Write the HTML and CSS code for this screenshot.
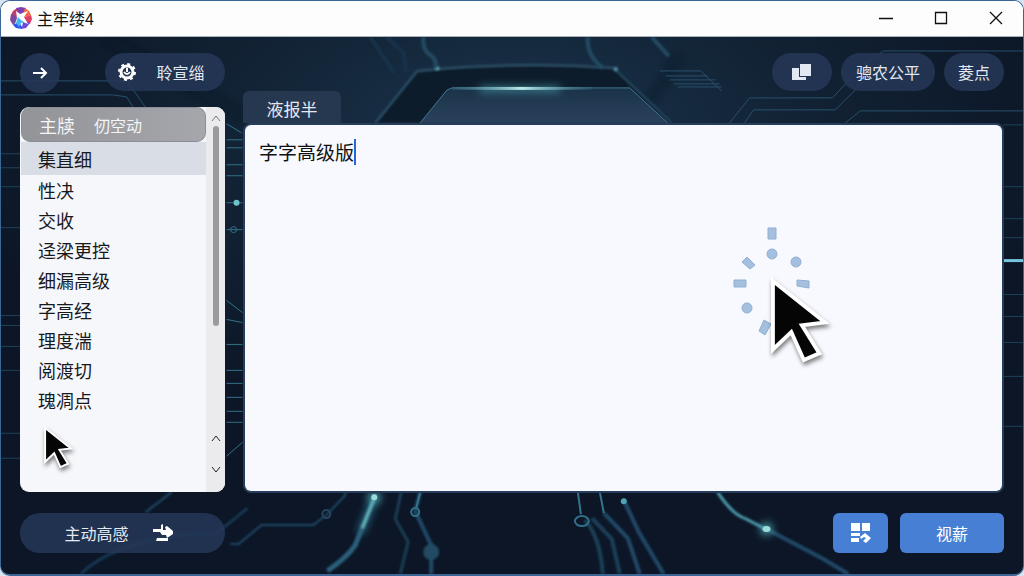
FILE: index.html
```html
<!DOCTYPE html>
<html lang="zh-CN">
<head>
  <meta charset="UTF-8" />
  <meta name="viewport" content="width=device-width, initial-scale=1.0"/>
  <title>主牢缕4</title>
  <link rel="stylesheet" href="styles.css">
</head>
<body>
  <div class="window">
    <header class="titlebar">
      <svg class="logo" viewBox="0 0 22 22">
        <path d="M11 11L1 8L3 4L7 1z" fill="#c0406b"/>
        <path d="M11 11L6 1L11 0L16 1z" fill="#7b3fb5"/>
        <path d="M11 11L15 1L19 4L21 8z" fill="#f06a3c"/>
        <path d="M11 11L21 8L22 12L20 17z" fill="#e03f62"/>
        <path d="M11 11L20 16L16 21L11 22z" fill="#6a4bd8"/>
        <path d="M11 11L12 22L6 21L3 18z" fill="#2f55f0"/>
        <path d="M11 11L3 18L0 13L1 7z" fill="#7a4a9c"/>
        <path d="M6 4L10 7L18 4L14 10L18 17L13 15L12 20L9 15L5 17L7 11z" fill="#fff"/>
        <path d="M8 10L11 13L14 15L11 16L9 20L6 16z" fill="#43b4f2"/>
      </svg>
      <h1>主牢缕4</h1>
      <div class="window-controls">
        <button aria-label="最小化"><svg viewBox="0 0 14 14"><path d="M0 7.5h14"/></svg></button>
        <button aria-label="最大化"><svg viewBox="0 0 14 14"><path d="M1.500 1.500h11v11h-11z"/></svg></button>
        <button aria-label="关闭"><svg viewBox="0 0 14 14"><path d="M1 1l12 12M13 1L1 13"/></svg></button>
      </div>
    </header>

    <main class="workspace">
      <svg class="circuit" viewBox="0 0 1024 538" preserveAspectRatio="none" aria-hidden="true">
        <defs>
          <radialGradient id="haze" cx="50%" cy="18%" r="55%">
            <stop offset="0" stop-color="#1b354c"/>
            <stop offset="0.5" stop-color="#122335"/>
            <stop offset="1" stop-color="#0c1626"/>
          </radialGradient>
          <linearGradient id="hood" x1="0" y1="0" x2="0" y2="1">
            <stop offset="0" stop-color="#1b3348"/>
            <stop offset="1" stop-color="#29415c"/>
          </linearGradient>
          <linearGradient id="beam">
            <stop offset="0" stop-color="#3b7892" stop-opacity="0.3"/>
            <stop offset="0.5" stop-color="#b9ebe8"/>
            <stop offset="1" stop-color="#3b7892" stop-opacity="0.2"/>
          </linearGradient>
          <filter id="glow" filterUnits="userSpaceOnUse" x="0" y="0" width="1024" height="538"><feGaussianBlur stdDeviation="4"/></filter>
          <filter id="soft" filterUnits="userSpaceOnUse" x="0" y="0" width="1024" height="538"><feGaussianBlur stdDeviation="1"/></filter>
        </defs>
        <rect width="1024" height="538" fill="url(#haze)"/>

        <!-- dark seams -->
        <g fill="none" stroke="#0a1220" stroke-width="6" opacity="0.6" filter="url(#glow)">
          <path d="M105 0L244 80M680 20l-30 45"/>
        </g>

        <!-- hood in the middle -->
        <g filter="url(#soft)">
          <path d="M375 86L417 34Q515 24 616 31L674 86z" fill="#0e1b2a"/>
          <path d="M375 86L417 34Q515 24 616 31" fill="none" stroke="#2f526a" stroke-width="2"/>
          <path d="M616 33L672 86" fill="none" stroke="#294a64" stroke-width="2"/>
          <circle cx="437" cy="31" r="2" fill="#6eb0bf"/>
          <circle cx="616" cy="32" r="2" fill="#5290a8"/>
        </g>
        <path d="M420 86L447 53L452 51H630L668 86z" fill="url(#hood)"/>
        <path d="M420 86L447 53L452 51H630L668 86" fill="none" stroke="#427791"/>
        <path d="M480 52H560" stroke="#4da4b8" stroke-width="4" filter="url(#glow)"/>
        <rect x="452" y="50" width="140" height="3" fill="url(#beam)"/>

        <!-- upper traces -->
        <g fill="none" stroke="#234b64" stroke-width="4" filter="url(#soft)">
          <path d="M423 0q0 14 6 17q9 6 6 14"/>
          <path d="M588 0q-2 18 15 31M652 0l17 19"/>
          <path d="M370 0l24 36M386 0l17 15l3 20" stroke="#193349"/>
        </g>
        <g fill="none" stroke="#28506d" stroke-width="1">
          <path d="M0 58h112l14 2l6 10M0 44h126l30 42h50"/>
          <path d="M660 34h41l21 20M666 39h42M670 43h46M674 47h46M678 50h44"/>
          <path d="M730 86l20-25h83l31-33l20-14h140M745 86l9-13h82l34-34"/>
          <path d="M846 86l15-12h163"/>
        </g>

        <!-- side traces -->
        <g fill="none" stroke="#1d4357" stroke-width="1">
          <path d="M0 117h22M0 131h22M0 150h22M0 191h22M0 279h22M0 289h22M0 310h22M0 334h22M0 397h22M0 422h22"/>
          <path d="M1004 88h20M1004 150h20M1004 182h20M1004 201h20M1004 258h20M1004 280h20M1004 306h20M1004 340h20M1004 390h20"/>
        </g>
        <g fill="none" stroke="#32718a" stroke-width="1">
          <path d="M226 87l15 9M226 103h16M226 111h16M226 128h16M226 139h16M226 166h16M226 193h16"/>
          <path d="M226 264l16 12M226 283l16 3M226 308h16M226 334h16M226 347h16M226 361h16M226 375h16M226 386h16M226 420l16-14"/>
          <path d="M1004 224h20" stroke="#75c5dc" stroke-width="3"/>
          <circle cx="233" cy="193" r="3"/>
        </g>
        <circle cx="236" cy="166" r="3" fill="#6fc1cb"/>

        <!-- lower traces -->
        <g fill="none" stroke="#214a67" stroke-width="2" filter="url(#soft)">
          <path d="M145 476l26-20M230 508h8l23-19h52l13-10l19-20v-4" stroke-width="2"/>
          <path d="M80 538q30-30 105-40h30l32-26" stroke="#193953" stroke-width="3"/>
          <path d="M401 456l-6 27l13 23l-8 32" stroke="#1d3d55" stroke-width="3"/>
          <path d="M420 456l-5 19l16 34l0 29" stroke-width="4"/>
          <path d="M585 484q15 16 18 54M592 482l20 21l8 35" stroke="#1d4059" stroke-width="4"/>
          <path d="M604 477l24 25l12 36" stroke-width="4"/>
          <path d="M624 464l15 32l25 42" stroke-width="4"/>
          <path d="M765 492l59 31l25 15" stroke-width="4"/>
        </g>
        <path d="M578 456l3 22M600 456l4 21M420 456l-4 16" fill="none" stroke="#34758d" stroke-width="2"/>
        <path d="M374 462l-14 35" fill="none" stroke="#2d7590" stroke-width="6" filter="url(#glow)"/>
        <g filter="url(#soft)">
          <path d="M374 462l-19 47q-8 12-28 26" fill="none" stroke="#2c617c" stroke-width="5"/>
          <path d="M374 462l-12 30" fill="none" stroke="#62b1b8" stroke-width="3"/>
          <path d="M718 456q15 23 29 27l21 11" fill="none" stroke="#4b9aac" stroke-width="3"/>
          <circle cx="431" cy="516" r="8" fill="#244c63"/>
        </g>
        <g fill="none" stroke="#326f88" stroke-width="2">
          <ellipse cx="582" cy="485" rx="7" ry="5"/>
          <circle cx="415" cy="476" r="4"/>
          <circle cx="326" cy="478" r="4" stroke="#27445e"/>
        </g>
        <g fill="#4ea4b4">
          <circle cx="374" cy="461" r="6" filter="url(#glow)"/>
          <circle cx="767" cy="493" r="6" filter="url(#glow)"/>
          <circle cx="624" cy="465" r="3"/>
        </g>
        <g fill="#9bdcd9"><circle cx="374" cy="461" r="3"/><ellipse cx="767" cy="493" rx="4" ry="3"/></g>
      </svg>

      <section class="sidebar">
        <div class="toolbar split">
          <button class="pill round" aria-label="前进">
            <svg width="16" height="14" viewBox="0 0 16 14"><path d="M1 7h13M9 2l5 5l-5 5" fill="none" stroke="#fff" stroke-width="2"/></svg>
          </button>
          <button class="pill settings">
            <svg width="20" height="18" viewBox="0 0 20 18">
              <g fill="none" stroke="#fff">
                <circle cx="10" cy="9" r="6" stroke-width="3"/>
                <circle cx="10" cy="9" r="8" stroke-width="2" stroke-dasharray="3 3.283"/>
                <path d="M10 5v4M7 9q3 4 6 0" stroke-width="2"/>
              </g>
            </svg>
            <span>聆宣缁</span>
          </button>
        </div>

        <div class="list-card">
          <div class="list-body">
            <div class="list-head"><span>主牍</span><span>仞空动</span></div>
            <ul>
              <li><button class="selected">集直细</button></li>
              <li><button>性决</button></li>
              <li><button>交收</button></li>
              <li><button>迳梁更控</button></li>
              <li><button>细漏高级</button></li>
              <li><button>字高经</button></li>
              <li><button>理度湍</button></li>
              <li><button>阅渡切</button></li>
              <li><button>瑰凋点</button></li>
            </ul>
          </div>
          <div class="scrollbar">
            <button aria-label="顶部"><svg width="10" height="7" viewBox="0 0 10 7"><path d="M1 6l4-5l4 5" stroke="#777"/></svg></button>
            <div class="thumb"></div>
            <button class="up" aria-label="向上"><svg width="10" height="7" viewBox="0 0 10 7"><path d="M1 6l4-5l4 5"/></svg></button>
            <button aria-label="向下"><svg width="10" height="7" viewBox="0 0 10 7"><path d="M1 1l4 5l4-5"/></svg></button>
          </div>
          <svg class="pointer small" viewBox="0 0 58 86"><path d="M2 2V73L21 55L34 84L50 77L32 48L56 45z"/></svg>
        </div>

        <button class="pill wide">
          <span>主动高感</span>
          <svg width="21" height="18" viewBox="0 0 21 18" fill="#fff">
            <path d="M0 5h8V1l2-1v6h3l-1-3l2-1l6 5v3l-6 4l-1-3h-4l-2-3H0z"/>
            <path d="M4 14h11v3H3z"/>
          </svg>
        </button>
      </section>

      <section class="editor">
        <div class="toolbar end">
          <button class="pill copy" aria-label="复制">
            <svg width="20" height="17" viewBox="0 0 20 17" fill="#e3e9f2"><path d="M8 0h11v12H8z"/><path d="M0 4h7v9h7v3H0z"/></svg>
          </button>
          <button class="pill">骢农公平</button>
          <button class="pill short">菱点</button>
        </div>
        <button class="tab">液报半</button>
        <div class="panel">
          <textarea aria-label="文本" spellcheck="false">字字高级版</textarea>
          <span class="caret"></span>
          <svg class="spinner" viewBox="0 0 78 110">
            <g fill="#a5bfdf" stroke="#91afd2">
              <path d="M35 1h8v11h-8zM1 53h12v7H1zM64 53l12 1v7l-12-2zM9 35l5-5l8 8l-5 4zM31 93l7 4l-6 11l-6-4z"/>
              <circle cx="39" cy="27" r="5"/>
              <circle cx="63" cy="35" r="5"/>
              <circle cx="14" cy="81" r="5"/>
            </g>
          </svg>
          <svg class="pointer" viewBox="0 0 58 86"><path d="M2 2V73L21 55L34 84L50 77L32 48L56 45z"/></svg>
        </div>
        <div class="actions">
          <button class="primary icon" aria-label="应用">
            <svg width="20" height="20" viewBox="0 0 20 20" fill="#fff">
              <path d="M0 0h9v8H0zM11 0h8v8h-8zM0 10h9v3H0zM0 15h8v4H0z"/>
              <path d="M9 14l5-4l6 5l-5 5l-3-2l3-3l-2-1l-3 2z"/>
            </svg>
          </button>
          <button class="primary">视薪</button>
        </div>
      </section>
    </main>
  </div>
</body>
</html>
```
FILE: styles.css
```css
* {
  box-sizing: border-box;
}
body {
  margin: 0;
  background: #d7e3ef;
  font-family: "Noto Sans CJK SC", sans-serif;
}
button {
  display: flex;
  align-items: center;
  justify-content: center;
  margin: 0;
  padding: 0;
  border: none;
  background: none;
  color: inherit;
  font-family: inherit;
  font-size: 16px;
  white-space: nowrap;
  cursor: pointer;
}
.window {
  display: flex;
  flex-direction: column;
  min-height: 100vh;
  border: 1px solid #3a6595;
  border-bottom-width: 2px;
  border-radius: 10px;
  overflow: hidden;
}
.titlebar {
  display: flex;
  align-items: center;
  gap: 5px;
  height: 36px;
  padding: 0 20px 2px 9px;
  background: #fdfdfe;
  border-bottom: 1px solid #a9b3be;
  color: #111;
}
.titlebar h1 {
  margin: 0;
  font-size: 16px;
  font-weight: 400;
}
.logo {
  width: 22px;
  height: 22px;
}
.window-controls {
  display: flex;
  gap: 41px;
  margin-left: auto;
}
.window-controls svg {
  width: 14px;
  height: 14px;
  fill: none;
  stroke: #111;
  stroke-width: 1.3;
}
.workspace {
  position: relative;
  flex: 1;
  display: grid;
  grid-template-columns: 205px 1fr;
  gap: 18px;
  padding: 16px 19px 21px;
  background: #0d1828;
}
.circuit {
  position: absolute;
  inset: 0;
  width: 100%;
  height: 100%;
}
.sidebar,
.editor {
  position: relative;
  display: flex;
  flex-direction: column;
  min-width: 0;
}
.toolbar {
  display: flex;
  height: 38px;
}
.split {
  justify-content: space-between;
}
.end {
  justify-content: flex-end;
  gap: 9px;
}
.pill {
  height: 38px;
  padding: 0 15px;
  border-radius: 20px;
  background: rgba(36, 55, 86, 0.88);
  color: #e3e9f2;
}
.round {
  width: 40px;
  height: 40px;
  padding: 0;
}
.settings {
  width: 120px;
  gap: 19px;
  padding: 0 20px 0 12px;
}
.copy {
  width: 60px;
}
.short {
  padding: 0 14px;
}
.wide {
  width: 100%;
  height: 40px;
  gap: 24px;
  padding-right: 22px;
}
.list-card {
  position: relative;
  flex: 1;
  display: flex;
  margin: 16px 0 21px;
  border-radius: 9px;
  background: #f5f7fb;
  overflow: hidden;
}
.list-body {
  flex: 1;
  padding-left: 1px;
}
.list-head {
  display: flex;
  align-items: center;
  gap: 19px;
  height: 35px;
  padding-left: 17px;
  border: 1px solid #8b8e94;
  border-radius: 9px;
  background: linear-gradient(90deg, #929498, #a5a7ac);
  color: #f4f5f7;
  font-size: 18px;
}
.list-head span + span {
  font-size: 16px;
}
.list-body ul {
  margin: 0;
  padding: 0;
  list-style: none;
}
.list-body li button {
  justify-content: flex-start;
  width: 100%;
  height: 30px;
  padding-left: 17px;
  color: #17191d;
  font-size: 18px;
}
.list-body li .selected {
  height: 33px;
  background: #d9dde6;
}
.scrollbar {
  display: flex;
  flex-direction: column;
  align-items: center;
  width: 19px;
  padding: 8px 0 19px;
  background: #ebebed;
}
.scrollbar svg {
  fill: none;
  stroke: #222;
}
.thumb {
  width: 6px;
  height: 200px;
  margin-top: 4px;
  border-radius: 3px;
  background: #9b9b9d;
}
.scrollbar .up {
  margin: auto 0 24px;
}
.tab {
  align-self: flex-start;
  width: 98px;
  height: 32px;
  padding-top: 3px;
  border-radius: 6px 6px 0 0;
  background: #263750;
  color: #e3e9f2;
  font-size: 17px;
}
.panel {
  position: relative;
  flex: 1;
  display: flex;
  border: 2px solid #263e5b;
  border-radius: 8px;
  background: #263e5b;
}
.panel textarea {
  flex: 1;
  padding: 12px 14px;
  border: none;
  border-radius: 6px;
  outline: none;
  background: #f7f9fe;
  color: #111;
  font-family: inherit;
  font-size: 19px;
  line-height: 30px;
  resize: none;
}
.caret {
  position: absolute;
  top: 14px;
  left: 109px;
  width: 2px;
  height: 26px;
  background: #2868d0;
}
.spinner {
  position: absolute;
  top: 28%;
  right: 191px;
  width: 78px;
  height: 110px;
}
.pointer {
  position: absolute;
  top: 42%;
  right: 175px;
  width: 56px;
  height: 83px;
  overflow: visible;
  fill: #050505;
  stroke: #fff;
  stroke-width: 4;
  filter: drop-shadow(1px 3px 2px rgba(0, 0, 0, 0.5));
}
.pointer.small {
  top: 83%;
  right: auto;
  left: 24px;
  width: 28px;
  height: 41px;
}
.actions {
  display: flex;
  justify-content: flex-end;
  gap: 12px;
  margin-top: 20px;
}
.primary {
  width: 104px;
  height: 40px;
  border-radius: 6px;
  background: #477fd5;
  color: #fff;
}
.icon {
  width: 55px;
}
```
